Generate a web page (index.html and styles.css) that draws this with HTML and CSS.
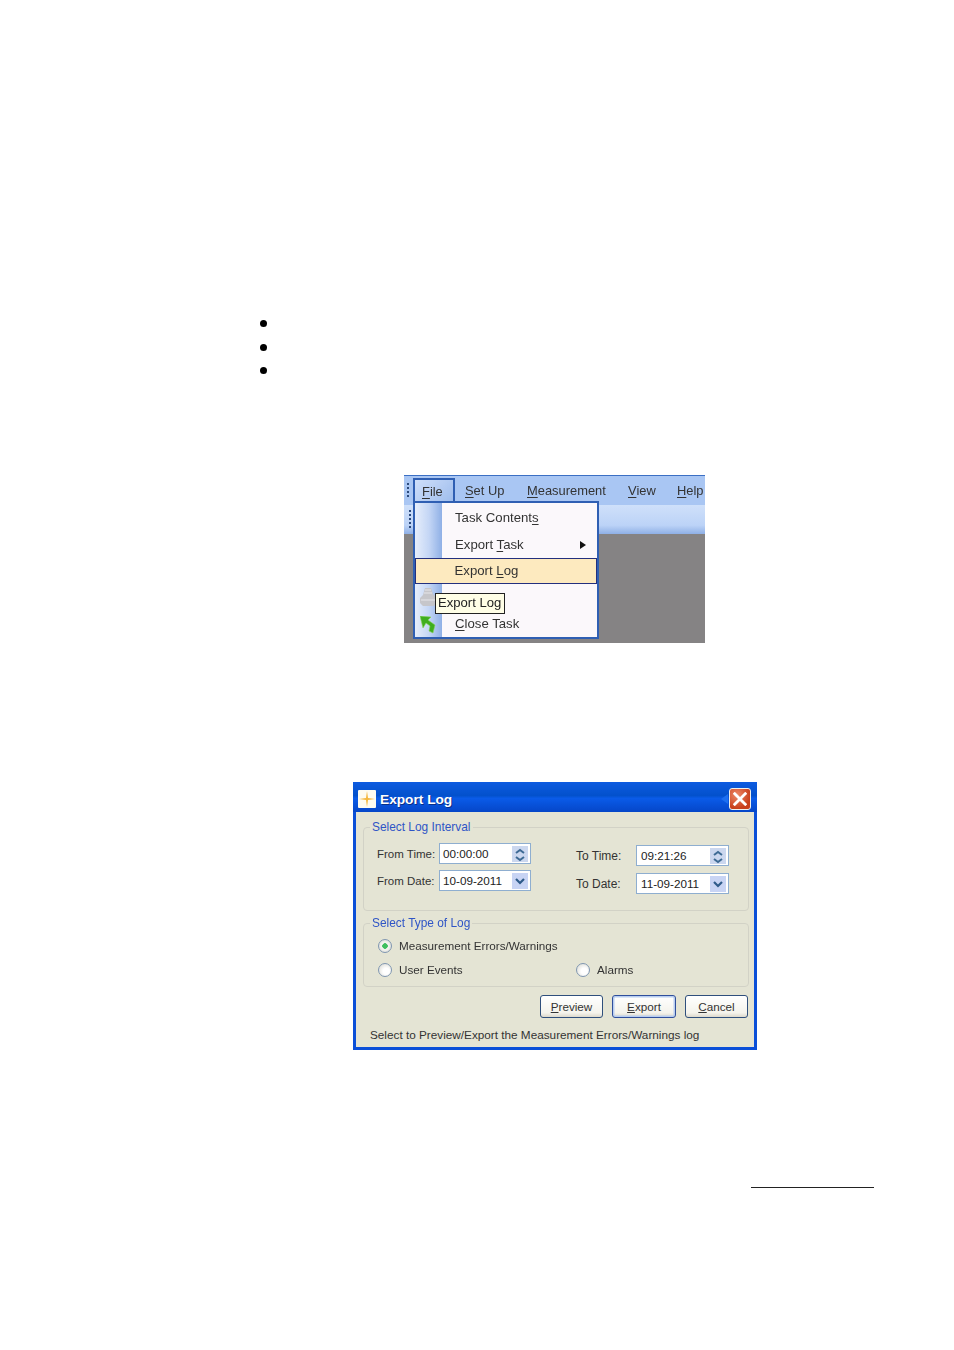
FILE: index.html
```html
<!DOCTYPE html>
<html lang="en">
<head>
<meta charset="utf-8">
<title>Export Log</title>
<link rel="stylesheet" href="styles.css">
</head>
<body>
<main class="page">
  <ul class="bullets"><li></li><li></li><li></li></ul>

  <figure class="app">
    <div class="menubar">
      <span class="grip"></span>
      <span class="m-file"><u>F</u>ile</span>
      <span class="m-item m-setup"><u>S</u>et Up</span>
      <span class="m-item m-meas"><u>M</u>easurement</span>
      <span class="m-item m-view"><u>V</u>iew</span>
      <span class="m-item m-help"><u>H</u>elp</span>
    </div>
    <div class="toolbar"><span class="grip grip-tool"></span></div>
    <div class="menu">
      <div class="mi">Task Content<u>s</u></div>
      <div class="mi mi-arrow">Export <u>T</u>ask<span class="arrow"></span></div>
      <div class="mi mi-active">Export <u>L</u>og</div>
      <div class="mi mi-blank">
        <svg class="ico-print" viewBox="0 0 17 18"><path d="M5 0h6l2 6 3 3v6l-2 3H3l-3-3v-5l3-3z" fill="#c6c6ca"/><path d="M5 2h6M4 5h8M1 12h14" stroke="#dcdce0" stroke-width="1.500" fill="none"/></svg>
      </div>
      <div class="mi"><svg class="ico-back" viewBox="0 0 16 18"><path d="M0 0l11 1-3 3 7 5-2 8-4-2 1-5-4-3-3 5z" fill="#3fae1e" stroke="#8ad45a" stroke-width=".6"/></svg><u>C</u>lose Task</div>
    </div>
    <div class="tip">Export Log</div>
  </figure>

  <section class="dialog">
    <header class="titlebar">
      <svg class="ico-app" viewBox="0 0 18 18"><rect width="18" height="18" rx="1" fill="#fdfbf0"/><path d="M9 1l1 7 7 1-7 1-1 7-1-7-7-1 7-1z" fill="#f5b73c"/></svg>
      <span class="title">Export Log</span>
      <span class="notch"></span>
      <span class="close"><svg viewBox="0 0 12 12"><path d="M1.500 1.500l9 9M10.500 1.500l-9 9" stroke="#fff" stroke-width="2.400" stroke-linecap="square"/></svg></span>
    </header>
    <div class="body">
      <fieldset class="grp grp-int">
        <legend>Select Log Interval</legend>
        <div class="col col-from">
          <div class="row"><label>From Time:</label><div class="inp"><span>00:00:00</span><span class="spin"><svg viewBox="0 0 16 16"><path d="M4 7l4-3 4 3M4 11l4 3 4-3" stroke="#3d6a94" stroke-width="2" fill="none"/></svg></span></div></div>
          <div class="row"><label>From Date:</label><div class="inp"><span>10-09-2011</span><span class="drop"><svg viewBox="0 0 16 16"><path d="M4 6l4 4 4-4" stroke="#2f5b8a" stroke-width="2.200" fill="none"/></svg></span></div></div>
        </div>
        <div class="col col-to">
          <div class="row"><label>To Time:</label><div class="inp"><span>09:21:26</span><span class="spin"><svg viewBox="0 0 16 16"><path d="M4 7l4-3 4 3M4 11l4 3 4-3" stroke="#3d6a94" stroke-width="2" fill="none"/></svg></span></div></div>
          <div class="row"><label>To Date:</label><div class="inp"><span>11-09-2011</span><span class="drop"><svg viewBox="0 0 16 16"><path d="M4 6l4 4 4-4" stroke="#2f5b8a" stroke-width="2.200" fill="none"/></svg></span></div></div>
        </div>
      </fieldset>
      <fieldset class="grp grp-type">
        <legend>Select Type of Log</legend>
        <div class="radio-row"><span class="radio on"></span><span>Measurement Errors/Warnings</span></div>
        <div class="radio-row radio-row2">
          <div class="radio-cell"><span class="radio"></span><span>User Events</span></div>
          <div class="radio-cell"><span class="radio"></span><span>Alarms</span></div>
        </div>
      </fieldset>
      <div class="btns">
        <button class="btn" type="button"><u>P</u>review</button>
        <button class="btn btn-def" type="button"><u>E</u>xport</button>
        <button class="btn" type="button"><u>C</u>ancel</button>
      </div>
      <p class="status">Select to Preview/Export the Measurement Errors/Warnings log</p>
    </div>
  </section>

  <div class="rule"></div>
</main>
</body>
</html>
```

FILE: styles.css
```css
* { box-sizing: border-box; }
html, body { margin: 0; padding: 0; background: #fff; }
body { font-family: "Liberation Sans", Arial, sans-serif; color: #222; }
.page { width: 954px; height: 1350px; overflow: hidden; padding-top: 320px; }

.bullets { list-style: none; margin: 0 0 0 260px; padding: 0; display: flex; flex-direction: column; gap: 16.500px; }
.bullets li { width: 7px; height: 7px; border-radius: 50%; background: #000; }

/* menu screenshot */
.app {
  position: relative; margin: 101px 0 0 404px; width: 301px; height: 168px;
  background: #858384; overflow: hidden; font-size: 13.200px; color: #333;
  border-top: 1px solid #3b6fc4; filter: blur(.3px);
}
.menubar {
  height: 29px; background: #a9c6f3; display: flex; align-items: flex-start; position: relative; font-size: 12.900px;
}
.grip { position: absolute; left: 3px; top: 7px; width: 2px; height: 14px; background: repeating-linear-gradient(#2c4a7c 0 2px, transparent 2px 4px); }
.grip-tool { left: 5px; top: 5px; height: 20px; }
.m-file {
  position: absolute; left: 9px; top: 2px; width: 42px; height: 25px; padding: 4px 0 0 7px;
  border: 2px solid #2f5fb3; border-bottom: 0; background: linear-gradient(135deg, #cfdffa, #9dbcec);
}
.m-item { position: absolute; top: 7px; }
.m-setup { left: 61px; }
.m-meas { left: 123px; }
.m-view { left: 224px; }
.m-help { left: 273px; }
.toolbar { position: relative; height: 29px; background: linear-gradient(#cfe0fa, #bcd3f7 70%, #8fb0e6); }
.menu {
  position: absolute; left: 9px; top: 25px; width: 186px; height: 138px;
  border: 2px solid #2f5fb3; padding: 2px 0 0; background: linear-gradient(90deg, #e6eefb 0, #c4d6f5 14px, #8fb0e6 27px, #fbf8fb 27px);
}
.mi { position: relative; height: 26.500px; line-height: 26.500px; padding-left: 40px; white-space: nowrap; }
.mi-active {
  width: 182px; height: 26px; line-height: 24px; border: 1.500px solid #23307e; background: #fdeabf; padding-left: 38.500px;
}
.arrow { position: absolute; left: 165px; top: 9px; border-left: 6px solid #111; border-top: 4.500px solid transparent; border-bottom: 4.500px solid transparent; }
.ico-print { position: absolute; left: 5px; top: 4px; width: 17px; height: 18px; filter: blur(.5px); }
.ico-back { position: absolute; left: 5px; top: 5px; width: 16px; height: 18px; }
.mi u, .m-file u, .m-item u { text-underline-offset: 2px; }
.tip {
  position: absolute; left: 31px; top: 117px; height: 21px; line-height: 18px; padding: 0 3px 0 2px;
  background: #fffee6; border: 1.500px solid #222; color: #222; font-size: 13.100px;
}

/* dialog */
.dialog {
  margin: 139px 0 0 353px; width: 404px; height: 268px; background: #0a4fd8;
  padding: 0 3px 3px; font-size: 11.700px; color: #333; border-radius: 3px 3px 0 0; filter: blur(.3px);
}
.titlebar {
  height: 30px; display: flex; align-items: center; position: relative;
  background: linear-gradient(#0d5be0 0, #0351cc 45%, #0a5be8 55%, #0546c8);
  margin: 0 -3px; padding: 3px 6px 0 5px;
}
.ico-app { width: 18px; height: 18px; flex: none; }
.title { margin: 2px 0 0 4px; color: #fff; font-weight: 700; font-size: 13.700px; text-shadow: 1px 1px 0 #0a2f86; }
.notch { margin-left: auto; width: 0; height: 0; border-right: 7px solid #1d6ff0; border-top: 5px solid transparent; border-bottom: 5px solid transparent; }
.close {
  width: 22px; height: 22px; margin-left: 1px; border: 1px solid #f1f0ea; border-radius: 3px;
  background: radial-gradient(circle at 35% 30%, #ee8a68, #c8401c 70%); display: flex; align-items: center; justify-content: center;
}
.close svg { width: 14px; height: 14px; }
.body { height: 235px; background: #e4e4d4; padding: 6px 5px 0 7px; }
.grp {
  position: relative; margin: 0; padding: 0; min-width: 0; border: 1.500px solid #d2d2c6; border-radius: 4px; width: 386px;
}
.grp legend { margin-left: 6px; padding: 0 2px; color: #2f55c6; font-size: 11.900px; line-height: 14px; }
.grp-int { height: 91px; display: flex; flex-direction: row; padding-top: 9px; margin-top: 2px; }
.col { display: flex; flex-direction: column; gap: 6px; }
.col-from { margin-left: 13px; width: 199px; }
.col-to { margin-top: 2px; gap: 7px; }
.row { display: flex; align-items: center; height: 21px; }
.row label { width: 62px; font-size: 11.500px; }
.col-to .row label { width: 60px; font-size: 12px; }
.inp {
  width: 92px; height: 21px; background: #fff; border: 1.500px solid #8eaed0; padding: 0 2px 0 3px;
  display: flex; align-items: center; justify-content: space-between; color: #222;
}
.col-to .inp { width: 93px; padding-left: 4px; }
.spin, .drop { width: 16px; height: 16px; display: block; background: #c8d4f4; }
.spin { background: linear-gradient(#cbd7ef 48%, #e4e4d4 48% 52%, #cbd7ef 52%); }
.spin svg, .drop svg { width: 16px; height: 16px; display: block; }
.grp-type { height: 71px; margin-top: 5px; }
.radio-row { display: flex; align-items: center; gap: 7px; margin: 8px 0 0 14px; height: 16px; }
.radio-row2 { margin-top: 8px; gap: 0; }
.radio-cell { display: flex; align-items: center; gap: 7px; width: 198px; flex: none; }
.radio + span { margin-top: -2px; }
.radio {
  width: 14px; height: 14px; border-radius: 50%; border: 1.500px solid #7f96b0; flex: none;
  background: radial-gradient(circle at 60% 60%, #fff 30%, #d4d4cc);
}
.radio.on { background: radial-gradient(circle, #3fbf5f 0 2.500px, #f2f2ee 3px 4px, #cfd0c8); }
.btns { display: flex; justify-content: flex-end; gap: 9px; margin: 8px 1px 0 0; }
.btn {
  width: 63px; height: 23px; padding: 0; font: inherit; color: #333; border: 1.500px solid #2f4f7c; border-radius: 3px;
  background: linear-gradient(#fff, #f4f3ec 80%, #dcd8cc);
}
.btn-def { width: 64px; border-color: #2f4f9c; box-shadow: inset 0 0 0 1.500px #b8cdf0; }
.status { margin: 10px 0 0 7px; font-size: 11.750px; }

.rule { margin: 137px 0 0 751px; width: 123px; height: 1px; background: #222; }
```
